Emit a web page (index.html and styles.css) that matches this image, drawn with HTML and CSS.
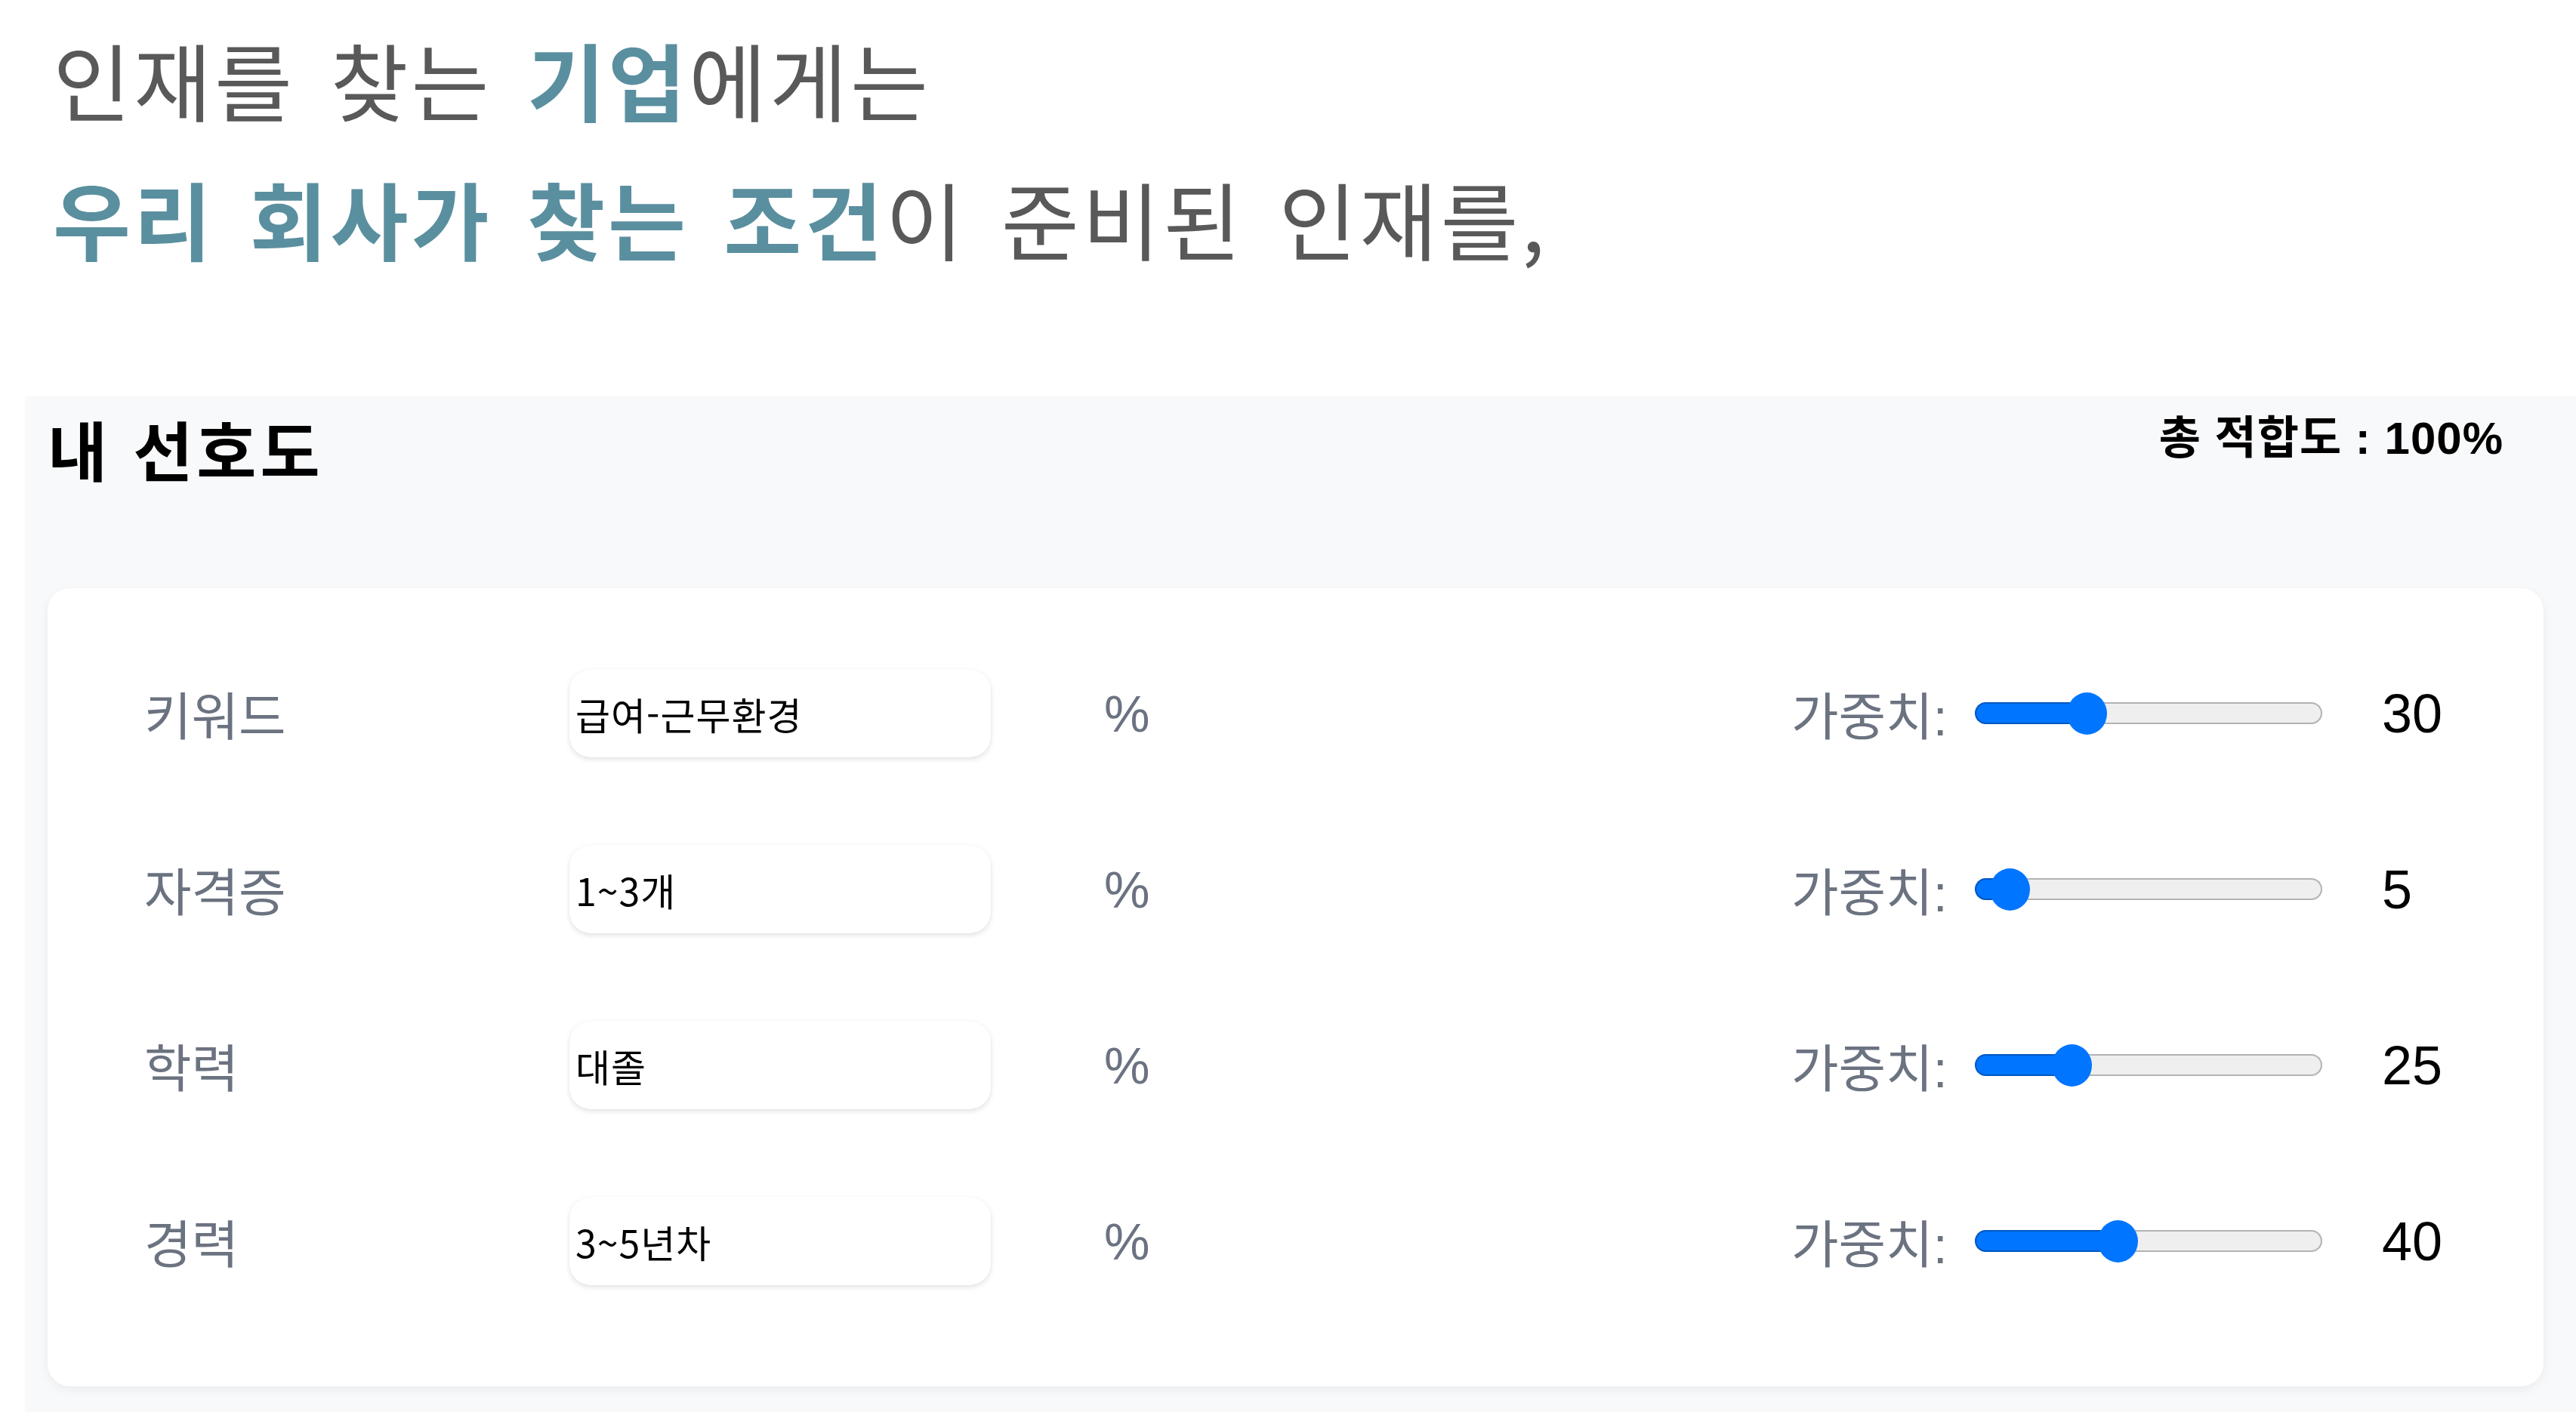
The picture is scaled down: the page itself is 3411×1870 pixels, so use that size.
FILE: index.html
```html
<!DOCTYPE html>
<html lang="ko">
<head>
<meta charset="utf-8">
<title>내 선호도</title>
<link rel="stylesheet" href="styles.css">
</head>
<body>
<div class="intro">
  <p class="intro-line">인재를 찾는 <strong class="accent">기업</strong>에게는</p>
  <p class="intro-line"><strong class="accent">우리 회사가 찾는 조건</strong>이 준비된 인재를,</p>
</div>
<section class="pref">
  <header class="pref-head">
    <h2 class="pref-title">내 선호도</h2>
    <div class="pref-total">총 적합도 : <b>100%</b></div>
  </header>
  <div class="pref-card">
    <div class="pref-row">
      <div class="pref-left">
        <span class="pref-label">키워드</span>
        <input class="pref-input" type="text" value="급여-근무환경">
        <span class="pref-pct">%</span>
      </div>
      <div class="pref-right">
        <span class="weight-label">가중치:</span>
        <input class="weight-slider" type="range" min="0" max="100" value="30" style="--fill:148px">
        <span class="weight-value">30</span>
      </div>
    </div>
    <div class="pref-row">
      <div class="pref-left">
        <span class="pref-label">자격증</span>
        <input class="pref-input" type="text" value="1~3개">
        <span class="pref-pct">%</span>
      </div>
      <div class="pref-right">
        <span class="weight-label">가중치:</span>
        <input class="weight-slider" type="range" min="0" max="100" value="5" style="--fill:46px">
        <span class="weight-value">5</span>
      </div>
    </div>
    <div class="pref-row">
      <div class="pref-left">
        <span class="pref-label">학력</span>
        <input class="pref-input" type="text" value="대졸">
        <span class="pref-pct">%</span>
      </div>
      <div class="pref-right">
        <span class="weight-label">가중치:</span>
        <input class="weight-slider" type="range" min="0" max="100" value="25" style="--fill:128px">
        <span class="weight-value">25</span>
      </div>
    </div>
    <div class="pref-row">
      <div class="pref-left">
        <span class="pref-label">경력</span>
        <input class="pref-input" type="text" value="3~5년차">
        <span class="pref-pct">%</span>
      </div>
      <div class="pref-right">
        <span class="weight-label">가중치:</span>
        <input class="weight-slider" type="range" min="0" max="100" value="40" style="--fill:189px">
        <span class="weight-value">40</span>
      </div>
    </div>
  </div>
</section>
</body>
</html>
```
FILE: styles.css
```css
html, body {
  margin: 0;
  padding: 0;
  background: #ffffff;
}
body {
  overflow: hidden;
  font-family: "Noto Sans CJK KR", "Noto Sans", sans-serif;
}

.intro {
  padding: 13px 0 0 70px;
}
.intro-line {
  margin: 0;
  font-size: 112px;
  line-height: 183.5px;
  letter-spacing: 4px;
  word-spacing: 11px;
  color: #595959;
  font-weight: 400;
  white-space: nowrap;
}
.accent {
  color: #5a8f9f;
  font-weight: 700;
}

.pref {
  margin: 145px 0 0 33px;
  padding: 17px 43px 40px 30px;
  background: #f8f9fa;
}
.pref-head {
  display: flex;
  justify-content: space-between;
  align-items: flex-start;
  padding-right: 53px;
}
.pref-title {
  margin: 0;
  font-size: 86px;
  line-height: 103px;
  font-weight: 700;
  color: #000;
  letter-spacing: 5px;
}
.pref-total {
  margin-top: 3px;
  font-family: "Liberation Sans", "Noto Sans CJK KR", sans-serif;
  font-size: 60px;
  line-height: 72px;
  font-weight: 700;
  color: #000;
  letter-spacing: 1px;
}
.pref-total b {
  font-weight: 700;
}

.pref-card {
  margin-top: 134px;
  padding: 107px 128px 134px 128px;
  background: #ffffff;
  border-radius: 30px;
  box-shadow: 0 4px 14px rgba(0, 0, 0, 0.06);
  display: flex;
  flex-direction: column;
  gap: 116px;
}
.pref-row {
  display: flex;
  justify-content: space-between;
  align-items: center;
  height: 117px;
}
.pref-left,
.pref-right {
  display: flex;
  align-items: center;
}
.pref-label {
  width: 563px;
  font-size: 68px;
  letter-spacing: 0;
  color: #6b7280;
}
.pref-input {
  box-sizing: border-box;
  width: 558px;
  height: 117px;
  margin: 0;
  padding: 0 8px;
  border: none;
  outline: none;
  border-radius: 28px;
  background: #ffffff;
  box-shadow: 0 3px 7px rgba(0, 0, 0, 0.11), 0 0 2px rgba(0, 0, 0, 0.06);
  font-family: "Noto Sans CJK KR", "Noto Sans", sans-serif;
  font-size: 50px;
  letter-spacing: 1px;
  color: #000;
}
.pref-pct {
  margin-left: 150px;
  font-family: "Liberation Sans", "Noto Sans CJK KR", sans-serif;
  font-size: 68px;
  color: #6b7280;
}

.weight-label {
  width: 243px;
  font-family: "Liberation Sans", "Noto Sans CJK KR", sans-serif;
  font-size: 68px;
  letter-spacing: 0;
  color: #6b7280;
}
.weight-slider {
  -webkit-appearance: none;
  appearance: none;
  width: 460px;
  height: 58px;
  margin: 0;
  padding: 0;
  background: transparent;
}
.weight-slider::-webkit-slider-runnable-track {
  height: 29px;
  border-radius: 15px;
  background: linear-gradient(to right, #0075ff var(--fill), #efefef var(--fill));
  box-shadow: inset 0 0 0 2px rgba(0, 0, 0, 0.25);
}
.weight-slider::-webkit-slider-thumb {
  -webkit-appearance: none;
  appearance: none;
  width: 53px;
  height: 56px;
  margin-top: -13.5px;
  border: none;
  border-radius: 50%;
  background: #0075ff;
}
.weight-value {
  width: 86px;
  margin-left: 79px;
  font-family: "Liberation Sans", sans-serif;
  font-size: 72px;
  color: #000;
}
```
